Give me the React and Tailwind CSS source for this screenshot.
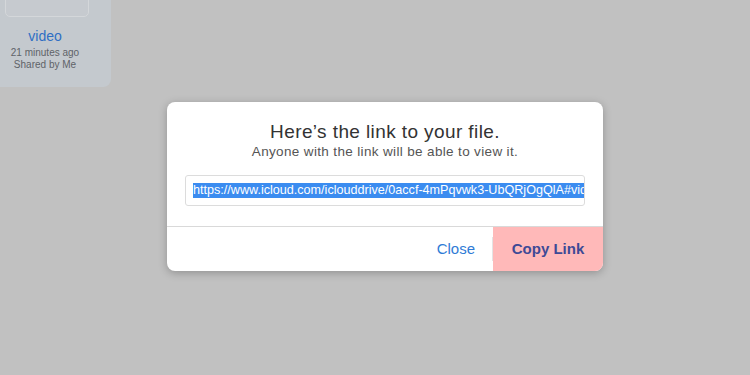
import React from 'react';

const LINK = 'https://www.icloud.com/iclouddrive/0accf-4mPqvwk3-UbQRjOgQlA#video';

const App = () => {
  return (
    <div
      className="relative w-[750px] h-[375px] overflow-hidden bg-[#c1c1c1]"
      style={{ fontFamily: '"Liberation Sans", Arial, sans-serif' }}
    >
      {/* File tile behind the overlay */}
      <div className="w-[111px] h-[87px] bg-[#c4c9ce] rounded-br-[8px] flex">
        <div className="w-[90px] flex flex-col items-center">
          <div className="ml-[3px] w-[84px] h-[18px] -mt-[1px] rounded-b-[5px] border border-[#d4d7da] bg-[#c6cacf]" />
          <div className="mt-[11px] text-[14px] leading-[16px] text-[#2f6fc4]">video</div>
          <div className="mt-[3px] text-[10px] leading-[12px] text-[#5f6368]">21 minutes ago</div>
          <div className="text-[10px] leading-[12px] text-[#5f6368]">Shared by Me</div>
        </div>
      </div>

      {/* Share link dialog */}
      <div className="absolute left-[167px] top-[102px] w-[436px] h-[169px] bg-white rounded-[8px] shadow-[0_2px_8px_rgba(0,0,0,0.25)] flex flex-col overflow-hidden">
        <div className="flex flex-col items-center pt-[19px]">
          <h1 className="text-[19px] leading-[22px] tracking-[0.4px] text-[#333]">Here’s the link to your file.</h1>
          <p className="mt-[1px] text-[13.5px] leading-[16px] tracking-[0.35px] text-[#555]">Anyone with the link will be able to view it.</p>
        </div>
        <div className="mx-[18px] mt-[15px] h-[31px] border border-[#dcdcdc] rounded-[3px] flex items-center px-[7px] overflow-hidden">
          <span className="whitespace-nowrap text-[12.6px] leading-[15px] bg-[#3b8cf0] text-white">{LINK}</span>
        </div>
        <div className="mt-[20px] border-t border-[#d9d9d9] flex-1 flex">
          <div className="flex-1 flex items-center justify-end pr-[17px]">
            <button className="text-[15px] text-[#2f7bd6]">Close</button>
          </div>
          <div className="w-px bg-[#e4e4e4] my-[10px]" />
          <div className="w-[110px] bg-[#ffb9b9] flex items-center justify-center">
            <button className="text-[15px] font-bold text-[#3e4a96]">Copy Link</button>
          </div>
        </div>
      </div>
    </div>
  );
};

export default App;
